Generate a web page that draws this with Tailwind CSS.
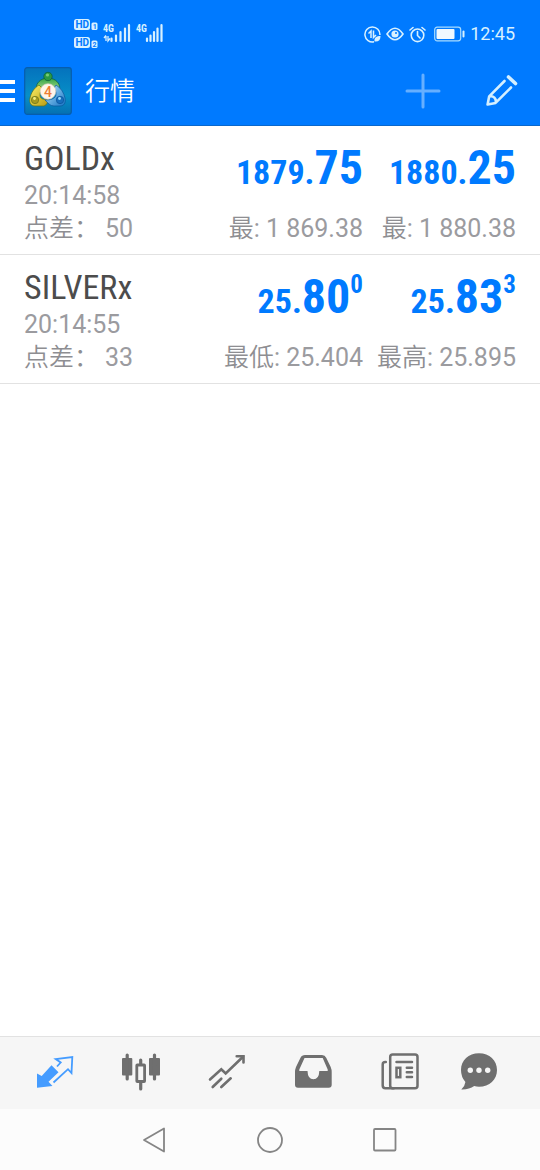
<!DOCTYPE html>
<html lang="zh-CN">
<head>
<meta charset="utf-8">
<meta name="viewport" content="width=device-width, initial-scale=1">
<title>行情</title>
<script src="https://cdn.jsdelivr.net/npm/@tailwindcss/browser@4"></script>
</head>
<body class="flex min-h-screen flex-col bg-white font-[Roboto,'Noto_Sans_CJK_SC',sans-serif]">
<header class="border-b border-[#0a68cc] bg-[#007aff] text-white">
  <div class="flex h-14 items-center justify-between pt-3 pr-[25px] pl-[74px]">
    <svg class="h-8 w-24" viewBox="0 0 96 32" fill="#d8f1ff" font-family="Roboto, sans-serif" font-weight="700" role="img" aria-label="双卡 4G 信号">
      <rect x="0" y="1" width="16" height="11" rx="2.500"/><rect x="17.500" y="4.500" width="6" height="7.500" rx="1.500"/>
      <rect x="0" y="19" width="16" height="11" rx="2.500"/><rect x="17.500" y="22.500" width="6" height="7.500" rx="1.500"/>
      <g fill="#007aff"><text x="1.500" y="10" font-size="10">HD</text><text x="18.700" y="11" font-size="7">1</text><text x="1.500" y="28" font-size="10">HD</text><text x="18.500" y="29" font-size="7">2</text></g>
      <g font-family="'Roboto Condensed', 'Liberation Sans Narrow', Roboto, sans-serif" font-size="10"><text x="29" y="14">4G</text><text x="62" y="14">4G</text></g>
      <path d="M32 18v5M30 20l2-2.500M34 18v5l2-2.500" stroke="#d8f1ff" stroke-width="1.300" fill="none"/>
      <path d="M37.500 20.500v2.500M42 17.500v5.500M46.500 14v9M51 10.500v12.500M55 7v16M73 20.500v2.500M76.500 17.500v5.500M80 14v9M83.500 10.500v12.500M87.500 7v16" stroke="#d8f1ff" stroke-width="2.200" stroke-linecap="round"/>
    </svg>
    <div class="flex items-center gap-[5px]">
      <svg class="size-[17px]" viewBox="0 0 17 17" fill="none" stroke="#d8f1ff" stroke-width="1.500" aria-hidden="true"><path d="M10 15.800A7.500 7.500 0 1 1 15.900 9"/><path d="M7 12V5L4.500 7.500M9.500 4.500v7L12 9"/><path d="M10.500 15.500c-.5-4 2-5.500 6-5.500 0 4-2 6-6 5.500z" fill="#d8f1ff" stroke="none"/></svg>
      <svg class="h-[14px] w-[18px]" viewBox="0 0 18 14" fill="none" stroke="#d8f1ff" stroke-width="1.600" aria-hidden="true"><path d="M1 7Q9-4.500 17 7Q9 18.500 1 7z"/><circle cx="9" cy="7" r="3.600" fill="#d8f1ff" stroke="none"/><circle cx="10" cy="6" r="1" fill="#007aff" stroke="none"/></svg>
      <svg class="size-[17px]" viewBox="0 0 17 17" fill="none" stroke="#d8f1ff" stroke-width="1.600" stroke-linecap="round" aria-hidden="true"><circle cx="8.500" cy="9.300" r="6.300"/><path d="M8.500 5.500v4l2.500 2.500M1 4l3-2.500M16 4l-3-2.500"/></svg>
      <svg class="ml-[3px] h-[16px] w-[31px]" viewBox="0 0 31 16" fill="none" aria-hidden="true"><rect x=".7" y="1.200" width="26" height="13.600" rx="2.500" stroke="#a8dcff" stroke-width="1.200"/><rect x="2.500" y="3" width="18" height="10" rx="1" fill="#f0f8ff"/><rect x="28.500" y="4.500" width="2" height="7" rx="1" fill="#d8f1ff"/></svg>
      <time class="text-[18px] leading-5 text-[#d8f1ff]">12:45</time>
    </div>
  </div>
  <div class="flex h-[69px] items-center pr-[21px]">
    <button type="button" aria-label="菜单" class="flex w-6 shrink-0">
      <svg class="h-6 w-4" viewBox="0 0 16 24" fill="#fff"><path d="M0 1h15v4H0zM0 10h15v4H0zM0 19h15v4H0z"/></svg>
    </button>
    <svg class="size-12 shrink-0" viewBox="0 0 48 48" role="img" aria-label="MetaTrader 4">
      <defs>
        <linearGradient id="sky" x2="0" y2="1"><stop stop-color="#0472bd"/><stop offset=".6" stop-color="#078fc7"/><stop offset="1" stop-color="#0570b2"/></linearGradient>
        <linearGradient id="leaf" x2="0" y2="1"><stop stop-color="#35a548"/><stop offset=".6" stop-color="#7ec774"/><stop offset="1" stop-color="#17702c"/></linearGradient>
        <linearGradient id="gold" x2="1" y2="1"><stop stop-color="#fff36a"/><stop offset="1" stop-color="#b79a12"/></linearGradient>
        <linearGradient id="aqua" x2="1" y2="1"><stop stop-color="#b8e8ff"/><stop offset="1" stop-color="#1673c4"/></linearGradient>
      </defs>
      <rect x=".7" y=".7" width="46.600" height="46.600" rx="2.500" fill="url(#sky)" stroke="#075dac" stroke-width="1.200"/>
      <path d="M12.500 23c-1-5 2-10 8-11.500h7c6 1.500 9 6.500 8 11.500l-5.500 1c-1-4-3-5-6-5s-5 1-6 5z" fill="url(#leaf)" stroke="#0b5b36" stroke-width=".7"/>
      <circle cx="24" cy="9.500" r="4.200" fill="#2b9a45" stroke="#0b5b36" stroke-width=".7"/><circle cx="23.500" cy="8" r="1.600" fill="#79cc77"/>
      <path d="M15 18c-5 3-8 8-9 13-1 5 1 8 5 8h9c3-1 4-4 4-7-4 1-8 0-8-4 0-3 1-5 3-6z" fill="url(#gold)" stroke="#5c7018" stroke-width=".7"/>
      <circle cx="11" cy="33" r="3.700" fill="#a69b20" stroke="#68731c" stroke-width=".7"/><circle cx="10.500" cy="31.500" r="1.400" fill="#f5ee80"/>
      <path d="M32 18c5 3 8 8 9 13 1 5-1 8-5 8h-6c-4 0-6-3-9-6 5 0 11-1 11-6 0-3-1-5-2-6z" fill="url(#aqua)" stroke="#08569b" stroke-width=".7"/>
      <circle cx="36" cy="33" r="3.700" fill="#176fbf" stroke="#0a5298" stroke-width=".7"/><circle cx="35.500" cy="31.500" r="1.400" fill="#9bdafa"/>
      <circle cx="24" cy="24.500" r="7.800" fill="#fff5e9" stroke="#d8cbbd" stroke-width=".6"/>
      <text x="24" y="29.500" text-anchor="middle" font-family="Roboto, sans-serif" font-weight="500" font-size="14" fill="#ed7d35">4</text>
    </svg>
    <h1 class="ml-[13px] flex-1 pt-[3px] text-[25px] leading-8 font-[350]">行情</h1>
    <button type="button" aria-label="添加" class="mr-[42px]">
      <svg class="size-9" viewBox="0 0 36 36" fill="none" stroke="#fff" stroke-opacity=".4" stroke-width="3" stroke-linecap="round"><path d="M18 2v32M2 18h32"/></svg>
    </button>
    <button type="button" aria-label="编辑">
      <svg class="size-9" viewBox="0 0 36 36" fill="none" stroke="#d4efff" stroke-width="2.600" stroke-linejoin="round" stroke-linecap="round"><path d="M21.500 8 6.200 23.300 4.600 31.500l8-1.600L28 14.500M6.500 23.500c4-1 7 2 6.200 6.200"/><path d="m25.500 4 7 6.500" stroke-width="3.600"/></svg>
    </button>
  </div>
</header>

<main class="flex-1 bg-white">
  <ul>
    <li class="flex gap-[15px] border-b border-[#e2e2e2] px-6 pt-[13px] pb-[9px] text-[25px] leading-[33px] text-[#9b9b9f]">
      <div class="min-w-0 flex-1 whitespace-nowrap">
        <h2 class="mb-[2px] font-['Roboto_Condensed','Liberation_Sans_Narrow',Roboto,sans-serif] text-[34px] leading-[38px] text-[#4c4c4c]">GOLDx</h2>
        <p>20:14:58</p>
        <p class="flex gap-[6px]"><span class="font-[350] text-[#8e8e92]">点差：</span><span>50</span></p>
      </div>
      <div class="flex w-[138px] flex-col items-end justify-between whitespace-nowrap">
        <p class="font-['Roboto_Condensed','Liberation_Sans_Narrow',Roboto,sans-serif] text-[34px] leading-[58px] font-bold text-[#007aff]">1879.<span class="text-[48px]">75</span></p>
        <p><span class="font-[350] text-[#8e8e92]">最</span>: 1 869.38</p>
      </div>
      <div class="flex w-[138px] flex-col items-end justify-between whitespace-nowrap">
        <p class="font-['Roboto_Condensed','Liberation_Sans_Narrow',Roboto,sans-serif] text-[34px] leading-[58px] font-bold text-[#007aff]">1880.<span class="text-[48px]">25</span></p>
        <p><span class="font-[350] text-[#8e8e92]">最</span>: 1 880.38</p>
      </div>
    </li>
    <li class="flex gap-[15px] border-b border-[#e2e2e2] px-6 pt-[13px] pb-[9px] text-[25px] leading-[33px] text-[#9b9b9f]">
      <div class="min-w-0 flex-1 whitespace-nowrap">
        <h2 class="mb-[2px] font-['Roboto_Condensed','Liberation_Sans_Narrow',Roboto,sans-serif] text-[34px] leading-[38px] text-[#4c4c4c]">SILVERx</h2>
        <p>20:14:55</p>
        <p class="flex gap-[6px]"><span class="font-[350] text-[#8e8e92]">点差：</span><span>33</span></p>
      </div>
      <div class="flex w-[138px] flex-col items-end justify-between whitespace-nowrap">
        <p class="font-['Roboto_Condensed','Liberation_Sans_Narrow',Roboto,sans-serif] text-[34px] leading-[58px] font-bold text-[#007aff]">25.<span class="text-[48px]">80</span><span class="align-[20px] text-[25px] leading-none">0</span></p>
        <p><span class="font-[350] text-[#8e8e92]">最低</span>: 25.404</p>
      </div>
      <div class="flex w-[138px] flex-col items-end justify-between whitespace-nowrap">
        <p class="font-['Roboto_Condensed','Liberation_Sans_Narrow',Roboto,sans-serif] text-[34px] leading-[58px] font-bold text-[#007aff]">25.<span class="text-[48px]">83</span><span class="align-[20px] text-[25px] leading-none">3</span></p>
        <p><span class="font-[350] text-[#8e8e92]">最高</span>: 25.895</p>
      </div>
    </li>
  </ul>
</main>

<nav class="grid grid-cols-6 border-t border-[#e2e2e2] bg-[#f6f6f6] px-3 py-3 text-[#6f6f6f]" aria-label="主导航">
  <button type="button" aria-label="行情" aria-current="page" class="flex justify-center text-[#459cff]">
    <svg class="size-12" viewBox="0 0 48 48"><path d="M6 24.500V38.700L21.500 37l-4-4.200 10-9.500-7-7L10.700 27z" fill="currentColor"/><path d="M26 17.500l3.700-4-5-3.500L41.300 8l-.8 16-3.500-3.800L22.500 33.500" fill="none" stroke="currentColor" stroke-width="1.800"/></svg>
  </button>
  <button type="button" aria-label="图表" class="flex justify-center">
    <svg class="size-12" viewBox="0 0 48 48" fill="currentColor"><rect x="5" y="9" width="10.300" height="17.500" rx="1"/><rect x="32" y="9" width="11" height="17.500" rx="1"/><path d="M10.200 6v24M37.500 6v24M23.700 11v4M23.700 33v7" stroke="currentColor" stroke-width="3.200" stroke-linecap="round"/><rect x="19.800" y="16" width="7.800" height="16.500" rx=".5" fill="none" stroke="currentColor" stroke-width="2.800"/></svg>
  </button>
  <button type="button" aria-label="交易" class="flex justify-center">
    <svg class="size-12" viewBox="0 0 48 48" fill="none" stroke="currentColor" stroke-width="2.600" stroke-linecap="round"><path d="M7 30.500 18.300 20.300l4.400 4.200L40 7.700M9.700 38l8.600-8.300M18.300 38l9.400-8.700"/><path d="M33.700 7.300h6.800v6.200"/></svg>
  </button>
  <button type="button" aria-label="历史" class="flex justify-center">
    <svg class="size-12" viewBox="0 0 48 48" fill="currentColor" fill-rule="evenodd"><path d="M16 6h17q3 0 4.200 2.800L41.700 18q1 2.500 1 5v12.700q0 3-3 3H9q-3 0-3-3V23q0-2.500 1-5l4.500-9.200Q12.800 6 16 6zM15.500 9 10.300 20.500v1.500h8.200q.3 8.300 5.900 8.300T30.300 22h8.400v-1.500L33.700 9z"/></svg>
  </button>
  <button type="button" aria-label="新闻" class="flex justify-center">
    <svg class="size-12" viewBox="0 0 48 48" fill="none" stroke="currentColor" stroke-width="2.500" stroke-linecap="round"><rect x="15.200" y="5.500" width="27.300" height="33.700" rx="2.500"/><path d="M10.800 13h-.6q-2.500 0-2.500 2.500v21q0 2.700 2.700 2.700h8.300M21.500 13h15.500M31.800 18.700H37M31.800 23.300H37M31.800 28H37"/><rect x="21.500" y="18.800" width="3.800" height="9.400"/></svg>
  </button>
  <button type="button" aria-label="聊天" class="flex justify-center">
    <svg class="size-12" viewBox="0 0 48 48"><path d="M18 4.300c10.500 0 18 7.200 18 16.700s-7.500 16.800-18 16.800q-2.500 0-4.800-.7Q8 40.800.3 40.500q3.700-3.500 4.100-7.500Q0 28 0 21C0 11.500 7.500 4.300 18 4.300z" fill="currentColor"/><g fill="#f6f6f6"><circle cx="9.300" cy="21.300" r="2.700"/><circle cx="18" cy="21.300" r="2.700"/><circle cx="26.700" cy="21.300" r="2.700"/></g></svg>
  </button>
</nav>
<footer class="flex h-[61px] items-center justify-center bg-[#fcfcfc] text-[#858585]">
  <button type="button" aria-label="返回" class="flex w-[115px] justify-center"><svg class="size-7" viewBox="0 0 28 28" fill="none" stroke="currentColor" stroke-width="1.800" stroke-linejoin="round"><path d="M3 14 23 2.500v23z"/></svg></button>
  <button type="button" aria-label="主屏幕" class="flex w-[115px] justify-center"><svg class="size-7" viewBox="0 0 28 28" fill="none" stroke="currentColor" stroke-width="1.800"><circle cx="14" cy="14" r="12"/></svg></button>
  <button type="button" aria-label="最近任务" class="flex w-[115px] justify-center"><svg class="size-7" viewBox="0 0 28 28" fill="none" stroke="currentColor" stroke-width="1.800"><rect x="3" y="3" width="21.500" height="21.500" rx="1"/></svg></button>
</footer>
</body>
</html>
